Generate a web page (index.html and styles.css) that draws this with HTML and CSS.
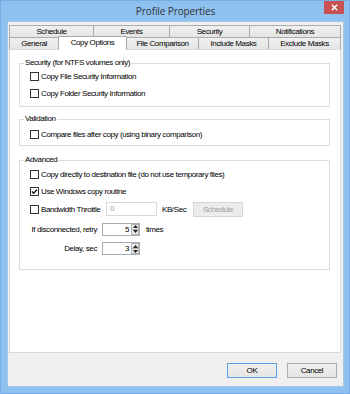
FILE: index.html
```html
<!DOCTYPE html>
<html>
<head>
    <title>Profile Properties</title>
    <link rel="stylesheet" href="styles.css">
</head>
<body>
    <div class="window">
        <div class="titlebar">
            <span></span>
            <span class="title">Profile Properties</span>
            <span class="close">
                <svg width="7" height="7" viewBox="0 0 7 7"><path d="M0.8 0.8 L6.2 6.2 M6.2 0.8 L0.8 6.2" stroke="#fff" stroke-width="1.5"/></svg>
            </span>
        </div>

        <div class="client">
            <div class="tabs">
                <div class="tab-row">
                    <div class="tab t-schedule">Schedule</div>
                    <div class="tab t-events">Events</div>
                    <div class="tab t-security">Security</div>
                    <div class="tab t-notify">Notifications</div>
                </div>
                <div class="tab-row front">
                    <div class="tab t-general">General</div>
                    <div class="tab t-copy active">Copy Options</div>
                    <div class="tab t-compare">File Comparison</div>
                    <div class="tab t-include">Include Masks</div>
                    <div class="tab t-exclude">Exclude Masks</div>
                </div>
            </div>

            <div class="page">
                <fieldset class="group sec">
                    <legend>Security (for NTFS volumes only)</legend>
                    <div class="opt"><span class="box"></span>Copy File Security Information</div>
                    <div class="opt"><span class="box"></span>Copy Folder Security Information</div>
                </fieldset>

                <fieldset class="group val">
                    <legend>Validation</legend>
                    <div class="opt"><span class="box"></span>Compare files after copy (using binary comparison)</div>
                </fieldset>

                <fieldset class="group adv">
                    <legend>Advanced</legend>
                    <div class="opt"><span class="box"></span>Copy directly to destination file (do not use temporary files)</div>
                    <div class="opt"><span class="box"><svg width="7" height="7" viewBox="0 0 7 7"><path d="M1 3.6 L2.7 5.3 L6 1.6" fill="none" stroke="#111" stroke-width="1.4"/></svg></span>Use Windows copy routine</div>
                    <div class="opt bw">
                        <span class="bw-check"><span class="box"></span>Bandwidth Throttle</span>
                        <span class="field">0</span>
                        <span class="unit">KB/Sec</span>
                        <span class="btn disabled">Schedule</span>
                    </div>
                    <div class="spin-row retry">
                        <span class="spin-label">If disconnected, retry</span>
                        <span class="spin">
                            <span class="spin-value">5</span>
                            <span class="spin-btns">
                                <span><svg width="5" height="3" viewBox="0 0 5 3"><polygon points="0,3 2.5,0 5,3" fill="#222"/></svg></span>
                                <span><svg width="5" height="3" viewBox="0 0 5 3"><polygon points="0,0 5,0 2.5,3" fill="#222"/></svg></span>
                            </span>
                        </span>
                        <span class="spin-unit">times</span>
                    </div>
                    <div class="spin-row">
                        <span class="spin-label">Delay, sec</span>
                        <span class="spin">
                            <span class="spin-value">3</span>
                            <span class="spin-btns">
                                <span><svg width="5" height="3" viewBox="0 0 5 3"><polygon points="0,3 2.5,0 5,3" fill="#222"/></svg></span>
                                <span><svg width="5" height="3" viewBox="0 0 5 3"><polygon points="0,0 5,0 2.5,3" fill="#222"/></svg></span>
                            </span>
                        </span>
                    </div>
                </fieldset>
            </div>

            <div class="actions">
                <span class="btn default">OK</span>
                <span class="btn">Cancel</span>
            </div>
        </div>
    </div>
</body>
</html>
```

FILE: styles.css
```css
body {
    margin: 0;
    font-family: "Liberation Sans", Arial, sans-serif;
    font-size: 8px;
    letter-spacing: -0.4px;
    color: #000;
}
.window {
    width: 350px;
    height: 394px;
    box-sizing: border-box;
    background: #8ec0f0;
    border: 1px solid #78ade6;
    padding: 0 5px 6px 6px;
    display: flex;
    flex-direction: column;
}
.titlebar {
    height: 20px;
    display: grid;
    grid-template-columns: 1fr auto 1fr;
    align-items: start;
}
.title {
    font-family: "Open Sans", sans-serif;
    font-size: 10px;
    letter-spacing: -0.1px;
    color: #333;
    line-height: 20px;
}
.close {
    justify-self: end;
    width: 20px;
    height: 13px;
    background: #c75050;
    display: flex;
    align-items: center;
    justify-content: center;
}
.client {
    flex: 1;
    background: #f0f0f0;
    border: 1px solid #a6c6e6;
    padding: 3px 2px 8px 1px;
    display: flex;
    flex-direction: column;
}

/* tabs */
.tab-row {
    display: flex;
    height: 12px;
}
.tab {
    box-sizing: border-box;
    height: 12px;
    border-top: 1px solid #acacac;
    border-left: 1px solid #acacac;
    background: linear-gradient(#f0f0f0, #e5e5e5);
    text-align: center;
    line-height: 11px;
    white-space: nowrap;
}
.tab:last-child {
    border-right: 1px solid #acacac;
}
.t-schedule { width: 84px; }
.t-events { width: 76px; }
.t-security { width: 80px; }
.t-notify { width: 92px; }
.t-general { width: 49px; }
.t-copy { width: 69px; }
.t-compare { width: 72px; }
.t-include { width: 70px; }
.t-exclude { width: 73px; }
.tab.active {
    height: 14px;
    margin-top: -1px;
    margin-right: -1px;
    border-right: 1px solid #acacac;
    background: #fff;
    line-height: 12px;
    position: relative;
    z-index: 1;
}

/* page */
.page {
    flex: 1;
    background: #fff;
    border: 1px solid #d9d9d9;
    padding: 0 10px 0 9px;
}
.group {
    border: 1px solid #dcdcdc;
    margin: 0;
    padding: 0;
    min-width: 0;
}
.group legend {
    padding: 0 1px;
    margin-left: 4px;
    line-height: 10px;
}
.sec {
    margin-top: 8px;
    padding-bottom: 4px;
}
.val {
    margin-top: 7px;
    padding-top: 2px;
    padding-bottom: 2px;
}
.adv {
    margin-top: 9px;
    padding-top: 1px;
    padding-bottom: 12px;
}
.opt {
    display: flex;
    align-items: center;
    height: 17px;
    padding-left: 10px;
    white-space: nowrap;
}
.box {
    flex: none;
    width: 9px;
    height: 9px;
    box-sizing: border-box;
    border: 1px solid #333;
    background: #fff;
    margin-right: 2px;
    display: flex;
    align-items: center;
    justify-content: center;
}
.opt.bw {
    height: 18px;
}
.bw-check {
    width: 76px;
    display: flex;
    align-items: center;
}
.field {
    box-sizing: border-box;
    width: 51px;
    height: 14px;
    border: 1px solid #d9d9d9;
    padding-left: 3px;
    line-height: 12px;
    color: #a0a0a0;
}
.unit {
    width: 31px;
    padding-left: 5px;
}
.btn {
    box-sizing: border-box;
    width: 50px;
    height: 15px;
    border: 1px solid #acacac;
    background: linear-gradient(#f0f0f0, #e5e5e5);
    display: flex;
    align-items: center;
    justify-content: center;
}
.btn.disabled {
    color: #a0a0a0;
    background: #ececec;
    border-color: #d5d5d5;
}
.btn.default {
    border-color: #5a9ee2;
}

/* spin boxes */
.spin-row {
    display: flex;
    align-items: center;
    height: 17px;
    padding-left: 10px;
    white-space: nowrap;
}
.spin-row.retry {
    height: 22px;
}
.spin-label {
    width: 67px;
    margin-right: 5px;
    text-align: right;
}
.spin {
    box-sizing: border-box;
    width: 38px;
    height: 13px;
    border: 1px solid #abadb3;
    background: #fff;
    display: flex;
}
.spin-value {
    flex: 1;
    text-align: right;
    padding-right: 2px;
    line-height: 11px;
}
.spin-btns {
    width: 8px;
    display: flex;
    flex-direction: column;
}
.spin-btns span {
    flex: 1;
    box-sizing: border-box;
    background: #e9e9e9;
    border: 1px solid #b5b5b5;
    display: flex;
    align-items: center;
    justify-content: center;
}
.spin-btns span + span {
    border-top: none;
}
.spin-unit {
    margin-left: 6px;
}

/* dialog buttons */
.actions {
    display: flex;
    justify-content: flex-end;
    gap: 10px;
    margin-top: 10px;
    padding-right: 4px;
}
```
